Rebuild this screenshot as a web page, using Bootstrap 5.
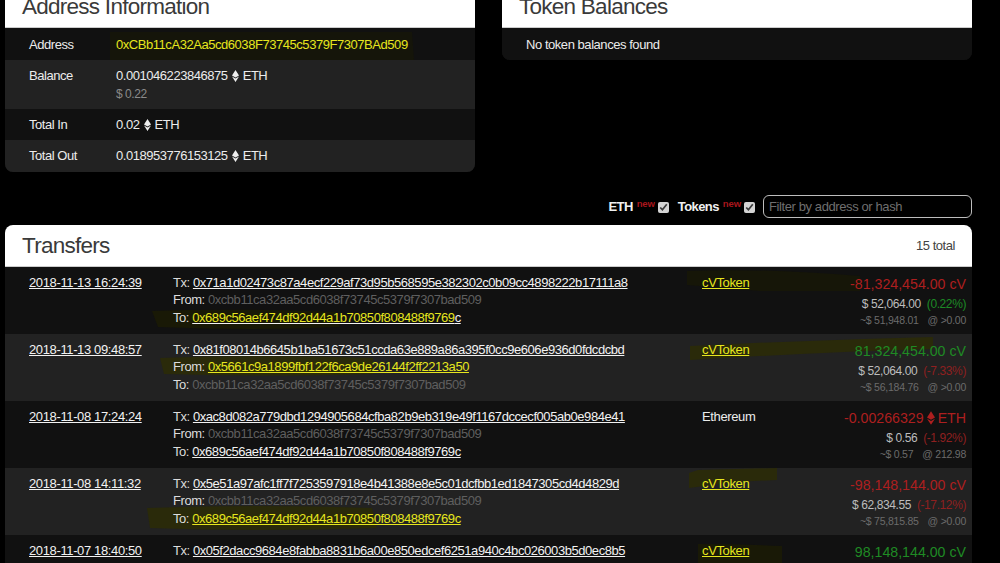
<!doctype html>
<html lang="en"><head><meta charset="utf-8">
<link href="https://cdn.jsdelivr.net/npm/bootstrap@5.3.0/dist/css/bootstrap.min.css" rel="stylesheet">
<style>
html,body{height:563px;overflow:hidden;background:#000}
body{font-family:"Liberation Sans",Arial,sans-serif;font-size:13px;letter-spacing:-.45px;color:#ececec;padding:0 28px 0 5px}
a{color:#f2f2f2}
.top-wrap{gap:27px;height:172px}
.info-box{flex:0 0 470px;background:#111;border-radius:0 0 8px 8px;overflow:hidden}
.info-box.second{flex:1 1 0;height:60px}
.hdr-clip{height:28px;background:#fff;color:#3a3a3a;font-size:22.5px;letter-spacing:-.74px;line-height:1;padding:0 18px 9px 17px;display:flex;align-items:flex-end;border-bottom:1px solid #ccc}
.info-row{display:flex;padding:7px 0 0 24px;position:relative;line-height:18px}
.info-row.r1{padding-top:8px}
.info-row .lbl{flex:0 0 87px;position:relative}
.r1{height:32px;background:#111}.r2{height:49px;background:#222}.r3{height:31px;background:#111}.r4{height:32px;background:#222}
.muted-sm{color:#8a8a8a;font-size:12px;line-height:17px;margin-top:1px}
.eth-ic{display:inline-block;width:7px;height:12px;vertical-align:-2px;margin:0 4px}
.amt .eth-ic{width:8px;height:14px;margin:0 3px;vertical-align:-2px}
.filter-wrap{height:23px;margin-top:23px;font-weight:700}
.filter-wrap label{color:#f0f0f0;display:flex;align-items:center;margin:0 9px 0 0;letter-spacing:-.6px}
.filter-wrap sup{color:#a8161c;font-weight:700;font-size:9.5px;letter-spacing:-.1px;margin:-6px 3px 0 4px;top:0}
.filter-wrap input[type=checkbox]{width:11px;height:11px;margin:1px 0 0;accent-color:#d4d4d4}
.filter-input{width:209px;height:23px;background:#000;border:1px solid #bdbdbd;border-radius:6px;padding:0 5px;font-size:13px;font-weight:400;color:#fff;font-family:inherit;letter-spacing:-.4px;margin-left:-1px}
.filter-input::placeholder{color:#6f6f6f;opacity:1}
.xfers{margin-top:7px;border-radius:8px 8px 0 0;overflow:hidden}
.xfers-hdr{height:42px;background:#fff;color:#3a3a3a;padding:0 17px;border-bottom:1px solid #ccc}
.xfers-hdr .ttl{font-size:22.5px;letter-spacing:-.74px}
.xfers-hdr .cnt{font-size:13px;color:#444}
.xrow{height:67px;display:flex;padding:7px 0 0 24px;line-height:17.4px;position:relative;background:#111}
.xrow.alt{background:#222}
.ink-svg{position:absolute;left:0;top:0;width:968px;height:67px}
.info-row .ink-svg{height:32px}
.c-date{flex:0 0 144px;position:relative;letter-spacing:-.37px}
.c-tx{flex:0 0 529px;color:#dcdcdc;position:relative;letter-spacing:-.44px}
.c-name{flex:0 0 97px;position:relative;letter-spacing:-.37px}
.c-val{flex:1 1 0;text-align:right;padding-right:6px;position:relative;letter-spacing:0}
.amt{font-size:14.2px;line-height:20px}
.usd{color:#bdbdbd;font-size:12px;line-height:20px;letter-spacing:-.4px}
.usd span{margin-left:3px}
.rate{color:#6b6b6b;font-size:10.5px;line-height:13px;letter-spacing:-.25px}
.rate span{margin-left:9px}
.neg{color:#ad1f1f}.pos{color:#1f8a24}
.negs{color:#8f2020}.poss{color:#1d8a25}
.grey{color:#5f5f5f}
.hl,.hl a{color:#e6e61e}
.val{position:relative}
</style></head><body>
<div class="d-flex top-wrap">
 <div class="info-box">
  <div class="hdr-clip">Address Information</div>
  <div class="info-row r1"><svg class="ink-svg" viewBox="5 28 968 32"><path fill="#15150a" d="M110 32H412L414 60H350Q310 64 270 60H110Z"/></svg><div class="lbl">Address</div><div class="val hl">0xCBb11cA32Aa5cd6038F73745c5379F7307BAd509</div></div>
  <div class="info-row r2"><div class="lbl">Balance</div><div class="val">0.001046223846875<svg class="eth-ic" viewBox="0 0 7 12"><path fill="#eee" d="M3.5 0 7 5.6 3.5 7.6 0 5.6zM0 6.6 3.5 8.6 7 6.6 3.5 12z"/></svg>ETH<div class="muted-sm">$ 0.22</div></div></div>
  <div class="info-row r3"><div class="lbl">Total In</div><div class="val">0.02<svg class="eth-ic" viewBox="0 0 7 12"><path fill="#eee" d="M3.5 0 7 5.6 3.5 7.6 0 5.6zM0 6.6 3.5 8.6 7 6.6 3.5 12z"/></svg>ETH</div></div>
  <div class="info-row r4"><div class="lbl">Total Out</div><div class="val">0.018953776153125<svg class="eth-ic" viewBox="0 0 7 12"><path fill="#eee" d="M3.5 0 7 5.6 3.5 7.6 0 5.6zM0 6.6 3.5 8.6 7 6.6 3.5 12z"/></svg>ETH</div></div>
 </div>
 <div class="info-box second">
  <div class="hdr-clip">Token Balances</div>
  <div class="info-row r1"><div class="lbl text-nowrap">No token balances found</div></div>
 </div>
</div>
<div class="d-flex justify-content-end align-items-center filter-wrap">
 <label>ETH<sup>new</sup><input type="checkbox" checked></label>
 <label>Tokens<sup>new</sup><input type="checkbox" checked></label>
 <input class="filter-input" placeholder="Filter by address or hash">
</div>
<div class="xfers">
 <div class="xfers-hdr d-flex justify-content-between align-items-center"><span class="ttl">Transfers</span><span class="cnt">15 total</span></div>
 <div class="xrow"><svg class="ink-svg" viewBox="5 267 968 67"><path fill="#191906" d="M152 311Q240 308 335 312L340 327Q250 331 158 327Z"/><path fill="#161608" d="M687 271Q760 268 860 276V291H760L687 285Z"/></svg><div class="c-date"><a href="#">2018-11-13 16:24:39</a></div>
  <div class="c-tx">Tx: <a href="#">0x71a1d02473c87a4ecf229af73d95b568595e382302c0b09cc4898222b17111a8</a><br>From: <span class="grey">0xcbb11ca32aa5cd6038f73745c5379f7307bad509</span><br>To: <a href="#"><span class="hl">0x689c56aef474df92d44a1b70850f808488f9769</span>c</a></div>
  <div class="c-name hl"><a href="#">cVToken</a></div>
  <div class="c-val"><div class="amt neg">-81,324,454.00 cV</div><div class="usd">$ 52,064.00 <span class="poss">(0.22%)</span></div><div class="rate">~$ 51,948.01<span>@ &gt;0.00</span></div></div></div>
 <div class="xrow alt"><svg class="ink-svg" viewBox="5 334 968 67"><path fill="#2a2a0a" d="M160 358Q260 354 373 358V374Q260 377 164 374Z"/><path fill="#2a2a0a" d="M690 346Q810 340 933 337V349Q820 352 690 360Z"/></svg><div class="c-date"><a href="#">2018-11-13 09:48:57</a></div>
  <div class="c-tx">Tx: <a href="#">0x81f08014b6645b1ba51673c51ccda63e889a86a395f0cc9e606e936d0fdcdcbd</a><br>From: <a href="#" class="hl">0x5661c9a1899fbf122f6ca9de26144f2ff2213a50</a><br>To: <span class="grey">0xcbb11ca32aa5cd6038f73745c5379f7307bad509</span></div>
  <div class="c-name hl"><a href="#">cVToken</a></div>
  <div class="c-val"><div class="amt pos">81,324,454.00 cV</div><div class="usd">$ 52,064.00 <span class="negs">(-7.33%)</span></div><div class="rate">~$ 56,184.76<span>@ &gt;0.00</span></div></div></div>
 <div class="xrow"><div class="c-date"><a href="#">2018-11-08 17:24:24</a></div>
  <div class="c-tx">Tx: <a href="#">0xac8d082a779dbd1294905684cfba82b9eb319e49f1167dccecf005ab0e984e41</a><br>From: <span class="grey">0xcbb11ca32aa5cd6038f73745c5379f7307bad509</span><br>To: <a href="#">0x689c56aef474df92d44a1b70850f808488f9769c</a></div>
  <div class="c-name">Ethereum</div>
  <div class="c-val"><div class="amt neg">-0.00266329<svg class="eth-ic" viewBox="0 0 7 12"><path fill="#ad1f1f" d="M3.5 0 7 5.6 3.5 7.6 0 5.6zM0 6.6 3.5 8.6 7 6.6 3.5 12z"/></svg>ETH</div><div class="usd">$ 0.56 <span class="negs">(-1.92%)</span></div><div class="rate">~$ 0.57<span>@ 212.98</span></div></div></div>
 <div class="xrow alt"><svg class="ink-svg" viewBox="5 468 968 67"><path fill="#2a2a0a" d="M147 508Q260 504 372 508L377 528Q260 532 150 528Z"/><path fill="#2a2a0a" d="M689 473 698 470 777 468V480L735 482 689 488Z"/></svg><div class="c-date"><a href="#">2018-11-08 14:11:32</a></div>
  <div class="c-tx">Tx: <a href="#">0x5e51a97afc1ff7f7253597918e4b41388e8e5c01dcfbb1ed1847305cd4d4829d</a><br>From: <span class="grey">0xcbb11ca32aa5cd6038f73745c5379f7307bad509</span><br>To: <a href="#" class="hl">0x689c56aef474df92d44a1b70850f808488f9769c</a></div>
  <div class="c-name hl"><a href="#">cVToken</a></div>
  <div class="c-val"><div class="amt neg">-98,148,144.00 cV</div><div class="usd">$ 62,834.55 <span class="negs">(-17.12%)</span></div><div class="rate">~$ 75,815.85<span>@ &gt;0.00</span></div></div></div>
 <div class="xrow"><svg class="ink-svg" viewBox="5 535 968 67"><path fill="#191906" d="M698 544Q740 544 782 546V563H698Z"/></svg><div class="c-date"><a href="#">2018-11-07 18:40:50</a></div>
  <div class="c-tx">Tx: <a href="#">0x05f2dacc9684e8fabba8831b6a00e850edcef6251a940c4bc026003b5d0ec8b5</a></div>
  <div class="c-name hl"><a href="#">cVToken</a></div>
  <div class="c-val"><div class="amt pos">98,148,144.00 cV</div></div></div>
</div>
</body></html>
